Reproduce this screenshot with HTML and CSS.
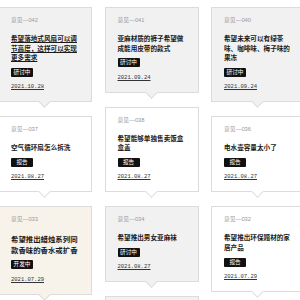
FILE: index.html
```html
<!DOCTYPE html>
<html lang="zh">
<head>
	<meta charset="UTF-8">
	<title>意见</title>
	<link rel="stylesheet" href="styles.css">
</head>
<body>
	<div class="board">
		<div class="col">
			<div class="card grey hover">
				<p class="no">意见—042</p>
				<h5>希望落地式风扇可以调节高度，这样可以实现更多需求</h5>
				<span class="tag">研讨中</span>
				<p class="date">2021.10.28</p>
			</div>
			<div class="card">
				<p class="no">意见—037</p>
				<h5>空气循环扇怎么拆洗</h5>
				<span class="tag">报告</span>
				<p class="date">2021.08.27</p>
			</div>
			<div class="card beige">
				<p class="no">意见—033</p>
				<h5 class="big">希望推出蜡烛系列同款香味的香水或扩香</h5>
				<span class="tag">开发中</span>
				<p class="date">2021.07.29</p>
			</div>
		</div>
		<div class="col">
			<div class="card grey">
				<p class="no">意见—041</p>
				<h5>亚麻材质的裤子希望做成能用皮带的款式</h5>
				<span class="tag">研讨中</span>
				<p class="date">2021.09.24</p>
			</div>
			<div class="card">
				<p class="no">意见—038</p>
				<h5>希望能够单独售卖饭盒盒盖</h5>
				<span class="tag">报告</span>
				<p class="date">2021.08.27</p>
			</div>
			<div class="card grey">
				<p class="no">意见—034</p>
				<h5>希望推出男女亚麻袜</h5>
				<span class="tag">研讨中</span>
				<p class="date">2021.08.27</p>
			</div>
			<div class="card grey">
				<p class="no">意见—031</p>
				<h5>希望推出更多颜色的收纳盒</h5>
				<span class="tag">报告</span>
				<p class="date">2021.07.20</p>
			</div>
		</div>
		<div class="col">
			<div class="card grey">
				<p class="no">意见—040</p>
				<h5>希望未来可以有绿茶味、咖啡味、梅子味的果冻</h5>
				<span class="tag">研讨中</span>
				<p class="date">2021.09.24</p>
			</div>
			<div class="card">
				<p class="no">意见—036</p>
				<h5>电水壶容量太小了</h5>
				<span class="tag">报告</span>
				<p class="date">2021.08.27</p>
			</div>
			<div class="card">
				<p class="no">意见—032</p>
				<h5>希望推出环保题材的家居产品</h5>
				<span class="tag">报告</span>
				<p class="date">2021.07.29</p>
			</div>
		</div>
	</div>
</body>
</html>
```

FILE: styles.css
```css
body,p,h5{margin: 0;padding: 0;}
body{background: #fff;overflow: hidden;font-family: "Liberation Sans","Noto Sans CJK SC",sans-serif;color: #222;}
.board{display: flex;gap: 12.5px;margin-left: -2px;padding-top: 7px;}
.col{display: flex;flex-direction: column;gap: 14px;width: 94px;flex: none;}
.card{position: relative;background: #fff;border: 1px solid #dcdcdc;padding: 9px 12px 11px;}
.card.grey{background: #f1f1f1;}
.card.beige{background: #f7f3ea;}
.card::after{content: "";position: absolute;left: 50%;bottom: -5px;width: 8px;height: 8px;margin-left: -5px;background: inherit;border-right: 1px solid #dcdcdc;border-bottom: 1px solid #dcdcdc;transform: rotate(45deg);}
.no{font-size: 5.8px;line-height: 6px;color: #999;margin-bottom: 11px;}
h5{font-size: 6.6px;line-height: 9.6px;font-weight: bold;color: #1a1a1a;font-family: "Noto Sans CJK SC",sans-serif;}
h5.big{font-size: 7.4px;line-height: 11px;}
.hover h5{text-decoration: underline;}
.tag{display: block;width: 22px;height: 9px;margin-top: 5px;background: #111;color: #fff;font-size: 5.6px;line-height: 9px;text-align: center;border-radius: 1px;font-family: "Noto Sans CJK SC",sans-serif;}
.date{margin-top: 7.5px;font-family: "Liberation Mono",monospace;font-size: 5.5px;line-height: 6px;color: #333;text-decoration: underline;}
```
